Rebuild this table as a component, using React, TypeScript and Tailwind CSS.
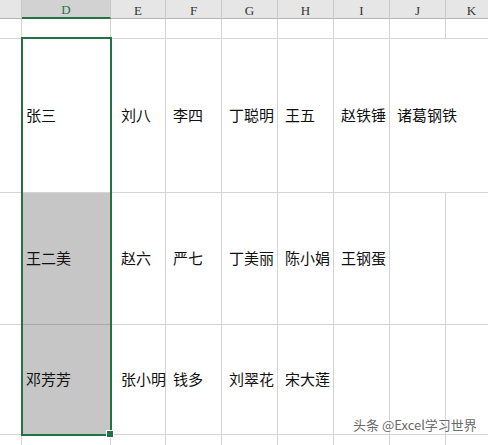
import React from "react";

const cols = ["", "D", "E", "F", "G", "H", "I", "J", "K"];
const pads = ["pl-0", "pl-[4px]", "pl-[10px]", "pl-[7px]", "pl-[7px]", "pl-[7px]", "pl-[7px]", "pl-[7px]", "pl-[7px]"];

const rows: { h: string; cells: string[] }[] = [
  { h: "h-[20px]", cells: ["", "", "", "", "", "", "", "", ""] },
  { h: "h-[154px]", cells: ["", "张三", "刘八", "李四", "丁聪明", "王五", "赵铁锤", "诸葛钢铁", ""] },
  { h: "h-[132px]", cells: ["", "王二美", "赵六", "严七", "丁美丽", "陈小娟", "王钢蛋", "", ""] },
  { h: "h-[110px]", cells: ["", "邓芳芳", "张小明", "钱多", "刘翠花", "宋大莲", "", "", ""] },
  { h: "h-[40px]", cells: ["", "", "", "", "", "", "", "", ""] },
];

export default function App() {
  return (
    <div
      className="relative w-[488px] h-[445px] overflow-hidden bg-white"
      style={{ fontFamily: '"Noto Sans CJK SC", "Noto Sans", sans-serif' }}
    >
      <div className="grid grid-cols-[22px_89px_55px_56px_56px_56px_56px_56px_52px] w-[498px]">
        {cols.map((c, i) => (
          <div
            key={"h" + i}
            className={
              "h-[19px] flex items-center justify-center text-[13px] leading-none pt-[2px] border-r border-r-[#c8c8c8] " +
              (c === "D"
                ? "bg-[#d2d2d2] text-[#217346] border-b-2 border-b-[#217346]"
                : "bg-[#e6e6e6] text-[#333] border-b border-b-[#b4b4b4]")
            }
            style={{ fontFamily: '"Liberation Serif", "DejaVu Serif", serif' }}
          >
            {c}
          </div>
        ))}
        {rows.map((r, ri) =>
          r.cells.map((t, ci) => {
            const noRight = ri === 1 && ci === 7;
            const gray = ci === 1 && (ri === 2 || ri === 3);
            return (
              <div
                key={ri + "-" + ci}
                className={
                  r.h +
                  " flex items-center whitespace-nowrap overflow-visible text-[15px] text-[#111] border-b " +
                  pads[ci] +
                  (gray ? " bg-[#c6c6c6] border-b-[#a8a8a8]" : " border-b-[#d4d4d4]") +
                  (noRight ? "" : " border-r border-r-[#d4d4d4]")
                }
              >
                <span className="relative z-10">{t}</span>
              </div>
            );
          })
        )}
      </div>

      {/* selection border */}
      <div className="absolute left-[21px] top-[37px] w-[91px] h-[399px] border-2 border-[#217346] pointer-events-none" />
      {/* fill handle */}
      <div className="absolute left-[107px] top-[431px] w-[6px] h-[6px] bg-[#217346] outline outline-1 outline-white" />

      {/* watermark */}
      <div
        className="absolute left-[353px] top-[418px] text-[13px] leading-none text-[#6b6b6b] whitespace-nowrap"
        style={{ textShadow: "0 0 2px #fff, 0 0 2px #fff" }}
      >
        头条 @Excel学习世界
      </div>
    </div>
  );
}
